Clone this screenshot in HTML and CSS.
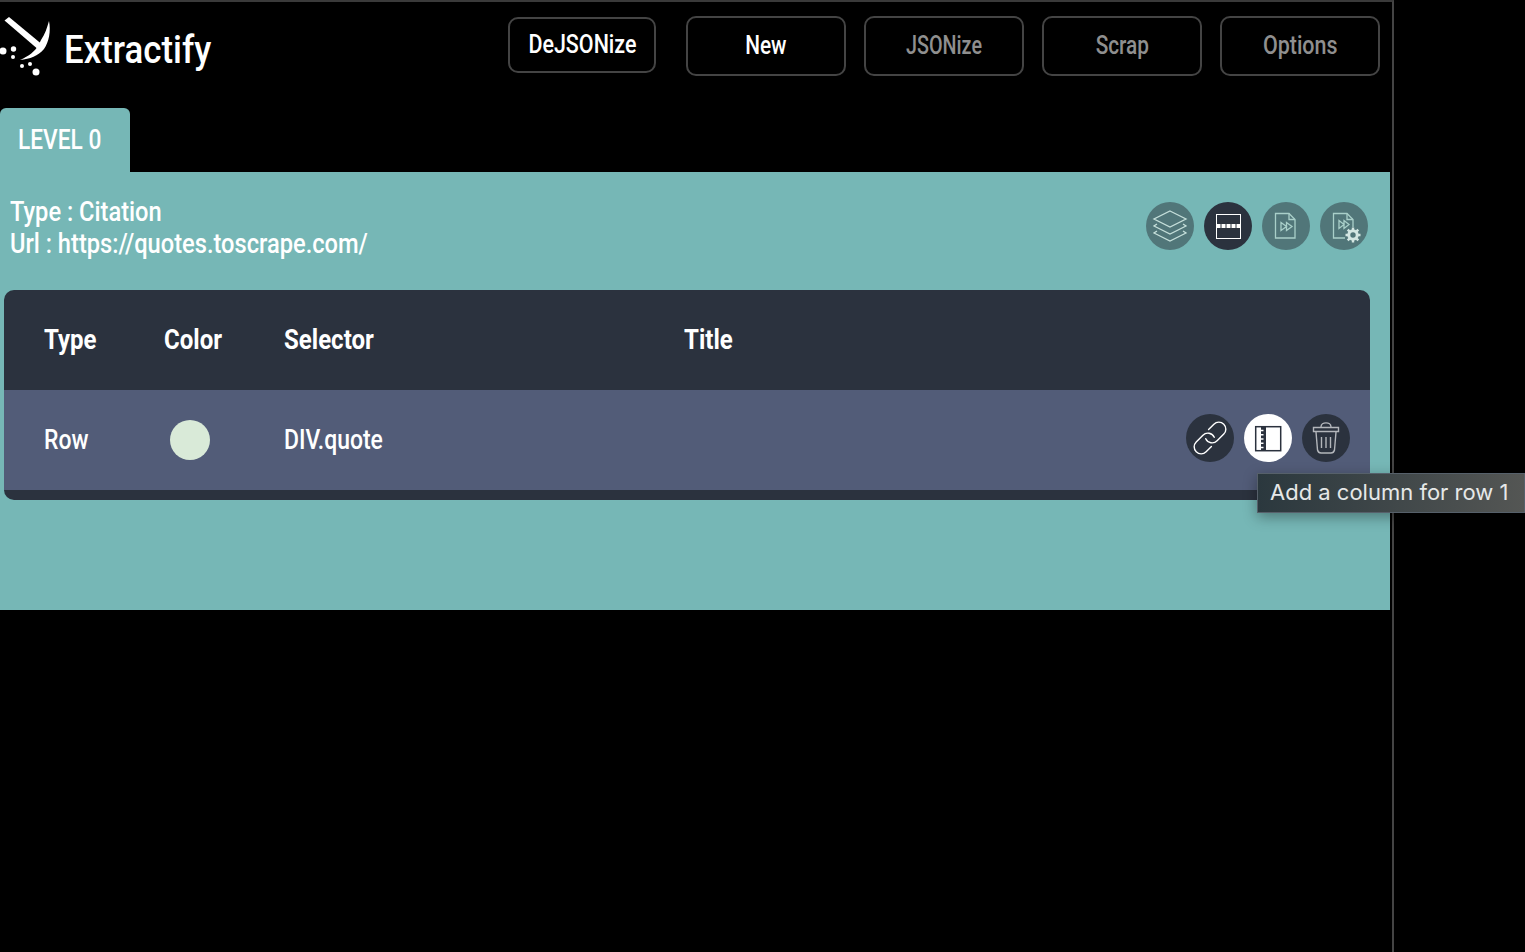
FILE: index.html
```html
<!DOCTYPE html>
<html lang="en">
<head>
<meta charset="utf-8">
<title>Extractify</title>
<link rel="stylesheet" href="styles.css">
</head>
<body>
<div class="main">
  <header class="topbar">
    <div class="brand">
      <svg class="logo" viewBox="0 0 52 62" width="52" height="62">
        <path d="M4.500 2.500 L9 -1 L44 28 L40 33 Z" fill="#fff"/>
        <path d="M49 3 C51 13 49 24 44 31 C38 38 30 41 20 42 C29 38 35 33 38 28 L41 22 C45 16 47 10 49 3 Z" fill="#fff"/>
        <circle cx="3" cy="33" r="3.500" fill="#fff"/>
        <circle cx="13.500" cy="31" r="2.700" fill="#fff"/>
        <circle cx="13" cy="39" r="2" fill="#fff"/>
        <circle cx="22" cy="48" r="2" fill="#fff"/>
        <circle cx="30" cy="46" r="2" fill="#fff"/>
        <circle cx="36" cy="54" r="3.500" fill="#fff"/>
      </svg>
      <span class="brand-name"><span class="cond">Extractify</span></span>
    </div>
    <nav class="actions">
      <button class="btn btn-small"><span class="cond mid wide">DeJSONize</span></button>
      <button class="btn btn-white"><span class="cond mid">New</span></button>
      <button class="btn"><span class="cond mid narrow">JSONize</span></button>
      <button class="btn"><span class="cond mid">Scrap</span></button>
      <button class="btn"><span class="cond mid wide">Options</span></button>
    </nav>
  </header>

  <div class="tab"><span class="cond tab-label">LEVEL 0</span></div>

  <section class="panel">
    <div class="panel-head">
      <div class="info">
        <div><span class="cond">Type : Citation</span></div>
        <div><span class="cond">Url : https://quotes.toscrape.com/</span></div>
      </div>
      <div class="tools">
        <span class="round muted">
          <svg viewBox="0 0 48 48" width="48" height="48" fill="none" stroke="#c5dfda" stroke-width="1.300">
            <path d="M24 9 L40 17 L24 25 L8 17 Z"/>
            <path d="M11 22 L8 24 L24 32 L40 24 L37 22"/>
            <path d="M11 29 L8 31 L24 39 L40 31 L37 29"/>
          </svg>
        </span>
        <span class="round dark">
          <svg viewBox="0 0 48 48" width="48" height="48" fill="none">
            <rect x="12.500" y="12.500" width="24" height="24" stroke="#fff" stroke-width="1"/>
            <path d="M12 22h25v4H12z" fill="#fff"/>
            <path d="M17 22v4M22 22v4M27 22v4M32 22v4" stroke="#2b323e" stroke-width="1"/>
          </svg>
        </span>
        <span class="round muted">
          <svg viewBox="0 0 48 48" width="48" height="48" fill="none" stroke="#a9cfc9" stroke-width="1.300">
            <path d="M13.500 11.500 H27 L33 17.500 V36 H13.500 Z"/>
            <path d="M27 11.500 V17.500 H33"/>
            <path d="M19 20.500 L24.500 24.500 L19 28.500 Z M24.500 20.500 L30 24.500 L24.500 28.500 Z"/>
          </svg>
        </span>
        <span class="round muted">
          <svg viewBox="0 0 48 48" width="48" height="48" fill="none" stroke="#a9cfc9" stroke-width="1.300">
            <path d="M25 36 H13.500 V11.500 H27 L33 17.500 V25"/>
            <path d="M27 11.500 V17.500 H33"/>
            <path d="M19 18.500 L24 22.500 L19 26.500 Z M24 18.500 L29 22.500 L24 26.500 Z"/>
            <circle cx="33" cy="33" r="4.200" stroke="#d3e6e2" stroke-width="3"/>
            <path d="M33 25.500v3M33 37.500v3M25.500 33h3M37.500 33h3M27.700 27.700l2 2M36.300 36.300l2 2M38.300 27.700l-2 2M29.700 36.300l-2 2" stroke="#d3e6e2" stroke-width="2.400"/>
          </svg>
        </span>
      </div>
    </div>

    <div class="table">
      <div class="grid thead">
        <span><span class="cond">Type</span></span>
        <span><span class="cond">Color</span></span>
        <span><span class="cond">Selector</span></span>
        <span><span class="cond">Title</span></span>
      </div>
      <div class="grid trow">
        <span><span class="cond">Row</span></span>
        <span class="swatch"></span>
        <span><span class="cond">DIV.quote</span></span>
        <span></span>
        <div class="row-tools">
          <span class="round dark">
            <svg viewBox="0 0 48 48" width="48" height="48" fill="none" stroke="#fff" stroke-width="1.400" stroke-linecap="round">
              <g transform="rotate(-45 24 24)">
                <path d="M19 31 H11.500 a7 7 0 0 1 0-14 H21 a7 7 0 0 1 6.500 9.500"/>
                <path d="M29 17 H36.500 a7 7 0 0 1 0 14 H27 a7 7 0 0 1-6.500-9.500"/>
              </g>
            </svg>
          </span>
          <span class="round white">
            <svg viewBox="0 0 48 48" width="48" height="48" fill="none">
              <rect x="11.700" y="12.700" width="25" height="24" stroke="#2b323e" stroke-width="1.500"/>
              <path d="M17 12v25h5V12z" fill="#2b323e"/>
              <path d="M17 16.500h2.500M17 20.800h2.500M17 25h2.500M17 29.200h2.500M17 33.500h2.500" stroke="#fff" stroke-width="1.500"/>
            </svg>
          </span>
          <span class="round dark">
            <svg viewBox="0 0 48 48" width="48" height="48" fill="none" stroke="#b3b6bb" stroke-width="1.400">
              <path d="M11.500 13.500 H36.500 V17.500 H11.500 Z"/>
              <path d="M19 13 C19 7.500 29 7.500 29 13"/>
              <path d="M14 18 L15.500 36 C16 38 17 39 19 39 H29 C31 39 32 38 32.500 36 L34 18"/>
              <path d="M19.500 23 V34 M24 23 V34 M28.500 23 V34"/>
            </svg>
          </span>
        </div>
      </div>
    </div>
  </section>
</div>
<div class="tooltip">Add a column for row 1</div>
</body>
</html>
```

FILE: styles.css
```css
* { box-sizing: border-box; }
html, body { margin: 0; padding: 0; height: 100%; overflow: hidden; }
body {
  background: #000;
  color: #fff;
  font-family: "Roboto", "Liberation Sans", sans-serif;
}
.cond {
  display: inline-block;
  white-space: nowrap;
  transform: scaleX(.86);
  transform-origin: left center;
}
.main {
  width: 1394px;
  height: 952px;
  border-top: 2px solid #3a3a3a;
  border-right: 2px solid #444;
}
.topbar {
  height: 106px;
  display: flex;
  justify-content: space-between;
  padding-right: 12px;
}
.brand { display: flex; align-items: flex-start; padding-top: 16px; }
.logo { display: block; overflow: visible; }
.brand-name { font-size: 39px; font-weight: 500; line-height: 60px; margin-left: 12px; margin-top: 2px; }
.brand-name .cond { transform: scaleX(.893); }
.actions { display: flex; align-items: flex-start; gap: 18px; padding-top: 14px; }
.btn {
  width: 160px;
  height: 60px;
  background: #000;
  border: 2px solid #444;
  border-radius: 10px;
  color: #8f8f8f;
  font: inherit;
  font-size: 26px;
  font-weight: 500;
  padding: 0 0 2px;
}
.cond.mid { transform: scaleX(.8); transform-origin: center; }
.cond.mid.wide { transform: scaleX(.825); }
.cond.mid.narrow { transform: scaleX(.76); }
.btn-small { width: 148px; height: 56px; margin-top: 1px; margin-right: 12px; color: #fff; }
.btn-white { color: #fff; }
.tab {
  width: 130px;
  height: 64px;
  background: #76b7b6;
  border-radius: 6px 6px 0 0;
  padding-left: 18px;
  font-size: 27px;
  font-weight: 500;
  line-height: 64px;
}
.cond.tab-label { transform: scaleX(.84); }
.panel {
  width: 1390px;
  height: 438px;
  background: #76b7b6;
  padding: 24px 0 0 4px;
}
.panel-head {
  height: 94px;
  display: flex;
  justify-content: space-between;
  padding-left: 6px;
}
.info { font-size: 27px; font-weight: 500; line-height: 32px; }
.info .cond { transform: scaleX(.876); }
.tools { display: flex; gap: 10px; padding-top: 6px; padding-right: 22px; }
.round {
  width: 48px;
  height: 48px;
  border-radius: 50%;
  display: block;
  flex: none;
}
.round svg { display: block; }
.muted { background: #517679; }
.dark { background: #2b323e; }
.white { background: #fff; }
.table {
  width: 1366px;
  height: 210px;
  background: #2b323e;
  border-radius: 10px;
  overflow: hidden;
}
.grid {
  display: grid;
  grid-template-columns: 120px 120px 400px 1fr auto;
  align-items: center;
  height: 100px;
  padding: 0 20px 0 40px;
}
.thead { font-size: 27px; font-weight: 700; }
.thead .cond { transform: scaleX(.89); }
.trow { background: #525c78; font-size: 27px; font-weight: 500; }
.trow .cond { transform: scaleX(.85); }
.swatch {
  width: 40px;
  height: 40px;
  border-radius: 50%;
  background: #d9ead8;
  margin-left: 6px;
}
.row-tools { display: flex; gap: 10px; margin-bottom: 4px; }
.tooltip {
  position: absolute;
  left: 1257px;
  top: 473px;
  width: 268px;
  height: 40px;
  padding-left: 12px;
  background: linear-gradient(90deg, #2b383e, #545654);
  border: 1px solid #56606a;
  box-shadow: 0 4px 14px rgba(0,0,0,.35);
  color: #e6e8e8;
  font-family: "Inter", sans-serif;
  font-size: 22px;
  line-height: 36px;
  white-space: nowrap;
}
```
